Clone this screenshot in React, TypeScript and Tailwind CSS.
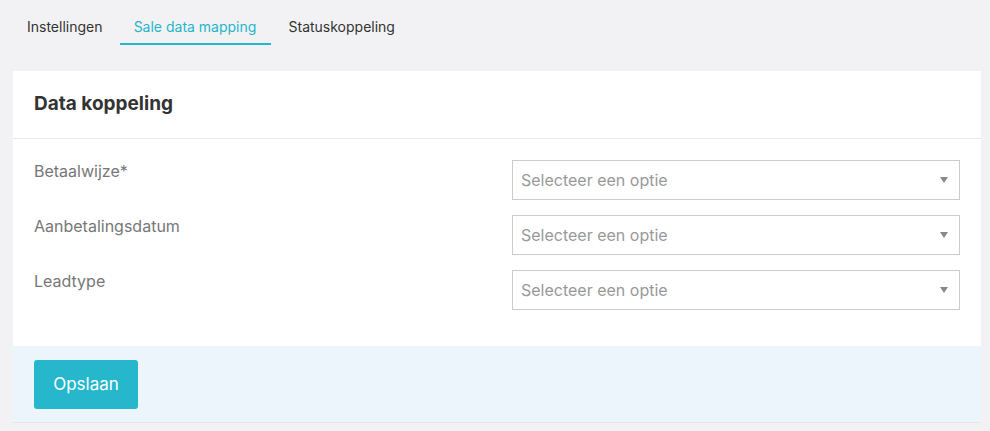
import React from "react";

const tabs = [
  { label: "Instellingen", extra: "" },
  { label: "Sale data mapping", extra: "ml-[3px] w-[151px] justify-center" },
  { label: "Statuskoppeling", extra: "ml-[4px]" },
];

const velden = ["Betaalwijze*", "Aanbetalingsdatum", "Leadtype"];

// Simpele select met placeholder en driehoekje rechts
const Keuze: React.FC = () => (
  <div className="relative h-[40px] border border-[#cccccc] bg-white flex items-center pl-[8px] pr-8 text-[16px] text-[#999999]">
    <span>Selecteer een optie</span>
    <svg
      className="absolute right-[11px] top-1/2 -translate-y-1/2"
      width="8"
      height="6"
      viewBox="0 0 8 6"
    >
      <path d="M0 0 H8 L4 6 Z" fill="#888888" />
    </svg>
  </div>
);

export default function App() {
  return (
    <div
      className="min-h-[431px] bg-[#f2f2f4] pl-[13px] pr-[9px] pt-[10px]"
      style={{ fontFamily: "Inter, 'Noto Sans', sans-serif" }}
    >
      {/* Tabbladen */}
      <nav className="flex">
        {tabs.map((t, i) =>
          i === 1 ? (
            <div
              key={t.label}
              className="ml-[3px] w-[151px] justify-center h-[35px] flex items-center text-[14px] text-[#26b5cb] border-b-[2px] border-[#26b7cc]"
            >
              {t.label}
            </div>
          ) : (
            <div
              key={t.label}
              className={
                i === 2
                  ? "ml-[4px] h-[35px] px-[14px] flex items-center text-[14px] text-[#333333] border-b-[2px] border-transparent"
                  : "h-[35px] px-[14px] flex items-center text-[14px] text-[#333333] border-b-[2px] border-transparent"
              }
            >
              {t.label}
            </div>
          )
        )}
      </nav>

      <section className="mt-[26px] bg-white border-b border-[#e6e6e9]">
        <header className="h-[68px] px-[21px] flex items-center border-b border-[#e8e8e8]">
          <h2 className="text-[19px] font-bold text-[#333333]">Data koppeling</h2>
        </header>
        <div className="px-[21px] pt-[21px] pb-[36px] flex flex-col gap-[15px]">
          {velden.map((v) => (
            <div key={v} className="grid grid-cols-2 gap-[30px]">
              <label className="text-[16px] leading-[22px] text-[#777777]">{v}</label>
              <Keuze />
            </div>
          ))}
        </div>
        <footer className="h-[76px] bg-[#ecf5fb] px-[21px] pt-[14px]">
          <button
            type="button"
            className="h-[49px] w-[104px] rounded-[3px] bg-[#26b7cc] text-white text-[17px]"
          >
            Opslaan
          </button>
        </footer>
      </section>
    </div>
  );
}
